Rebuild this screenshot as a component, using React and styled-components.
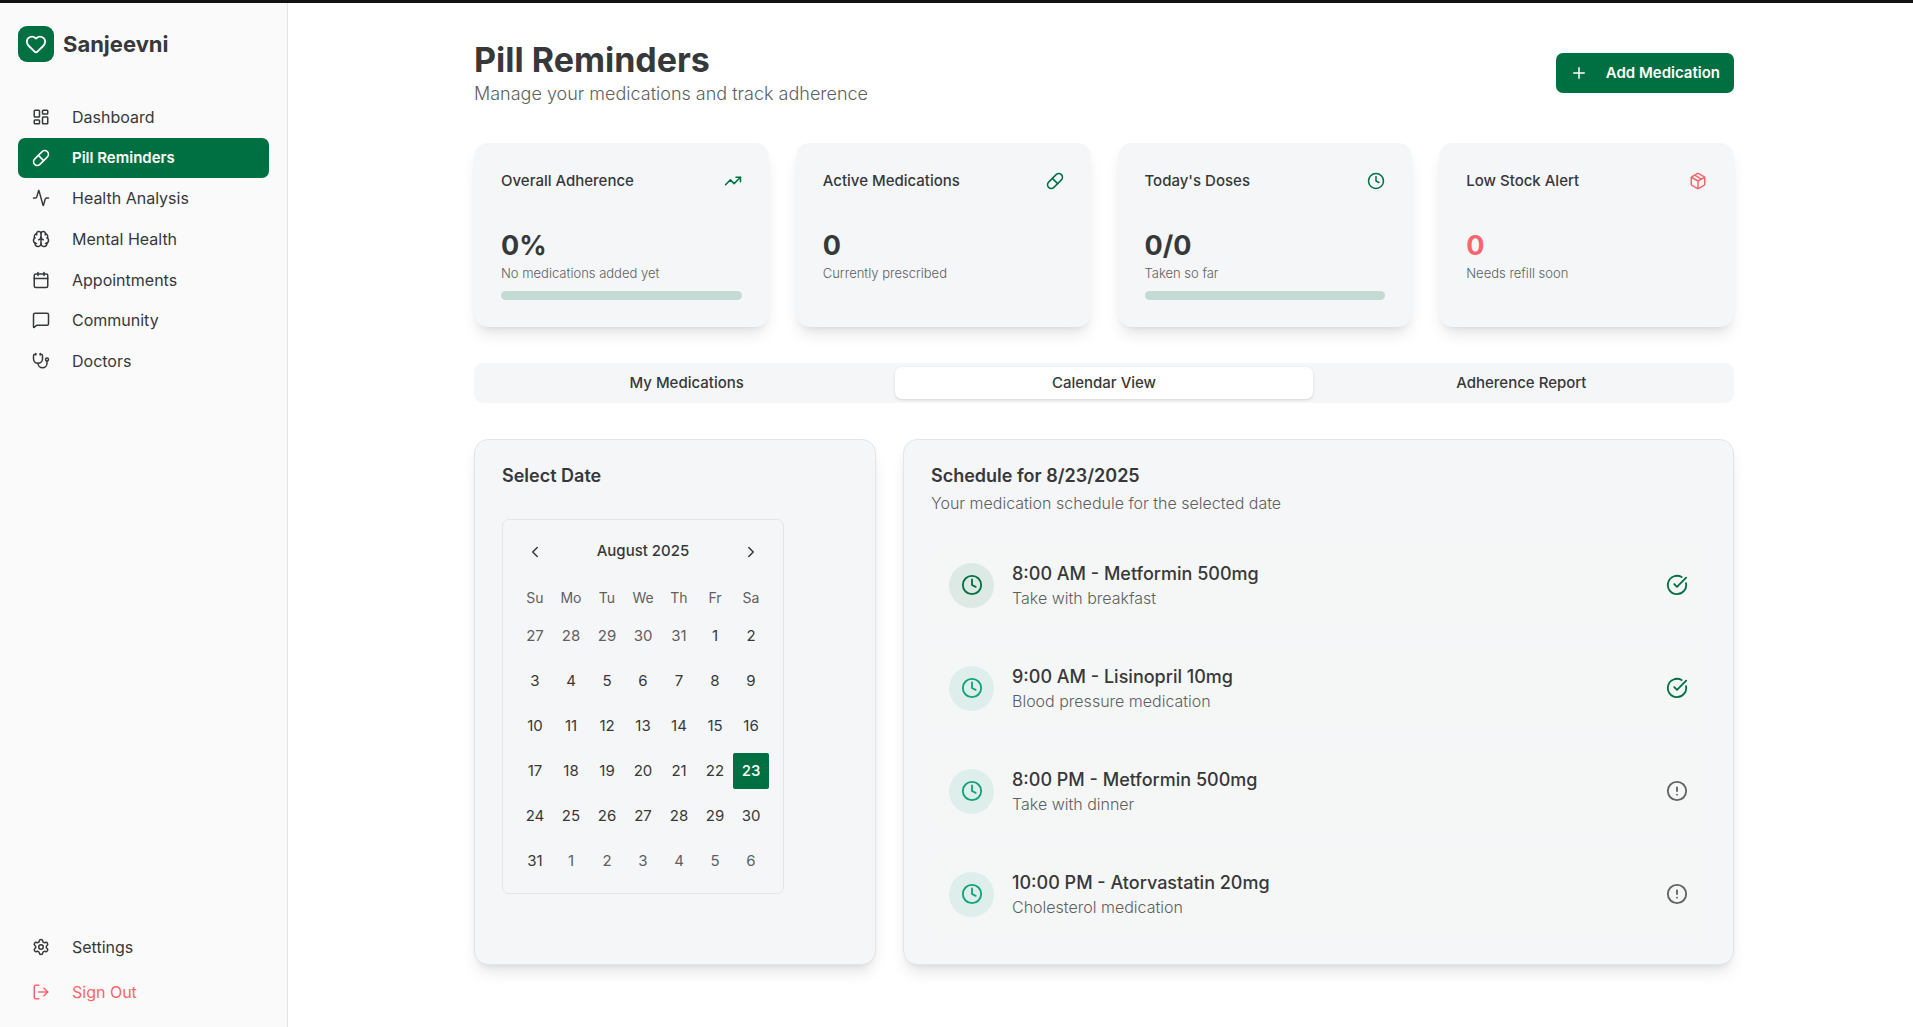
import React, { useState } from "react";
import styled, { createGlobalStyle, css } from "styled-components";
import {
  Activity, Brain, Calendar, ChevronLeft, ChevronRight, CircleAlert, CircleCheckBig, Clock,
  Heart, LayoutDashboard, LogOut, MessageSquare, Package, Pill, Plus, Settings, Stethoscope, TrendingUp,
} from "lucide-react";

const color = {
  primary: "#007042",
  accent: "#10a37a",
  danger: "#f8666d",
  text: "#37383a",
  muted: "#5d5f62",
  card: "#f5f6f8",
  border: "#e4e5e7",
};

const GlobalStyle = createGlobalStyle`
  *, *::before, *::after { box-sizing: border-box; }
  body {
    margin: 0;
    background: #fff;
    color: ${color.text};
    font-family: Inter, "Liberation Sans", sans-serif;
    font-size: 16px;
  }
  h1, h2, h3, p, ul { margin: 0; padding: 0; }
  button { font: inherit; color: inherit; border: 0; background: none; padding: 0; cursor: pointer; }
  svg { flex: none; display: block; }
`;

const Shell = styled.div`
  display: flex;
  min-height: 100vh;
  border-top: 3px solid #121212;
`;

const Sidebar = styled.aside`
  flex: none;
  width: 288px;
  display: flex;
  flex-direction: column;
  padding: 23px 18px 13px;
  background: #fafafa;
  border-right: 1px solid #e5e5e5;
`;

const Brand = styled.div`
  display: flex;
  align-items: center;
  gap: 9px;
  margin-bottom: 35px;
  font-size: 22px;
  line-height: 34px;
  font-weight: 700;
`;

const BrandMark = styled.span`
  display: grid;
  place-items: center;
  width: 36px;
  height: 36px;
  border-radius: 9px;
  background: ${color.primary};
  color: #fff;
`;

const NavList = styled.nav`
  display: grid;
  grid-auto-rows: 1fr;
  height: 284px;
`;

const NavLink = styled.a`
  display: flex;
  align-items: center;
  gap: 22px;
  padding: 0 14px;
  border-radius: 7px;
  font-size: 16px;
  text-decoration: none;
  color: ${(p) => (p.$tone === "danger" ? color.danger : color.text)};
  ${(p) => p.$active && css`
    background: ${color.primary};
    color: #fff;
    font-size: 15px;
    font-weight: 600;
  `}
`;

const FooterNav = styled.nav`
  display: grid;
  grid-auto-rows: 45px;
  margin-top: auto;
`;

const Main = styled.main`
  flex: 1;
  min-width: 0;
  padding: 36px 18px 36px 25px;
`;

const Content = styled.div`
  display: grid;
  gap: 36px;
  max-width: 1260px;
  margin: 0 auto;
`;

const PageHeader = styled.header`
  display: flex;
  align-items: center;
  justify-content: space-between;
`;

const PageTitle = styled.h1`
  font-size: 34px;
  line-height: 41px;
  font-weight: 700;
`;

const PageSubtitle = styled.p`
  font-size: 18px;
  line-height: 27px;
  font-weight: 300;
  color: ${color.muted};
`;

const PrimaryButton = styled.button`
  display: flex;
  align-items: center;
  gap: 18px;
  height: 40px;
  padding: 0 14px 1px;
  border-radius: 7px;
  background: ${color.primary};
  color: #fff;
  font-size: 15px;
  font-weight: 600;
`;

const StatGrid = styled.section`
  display: grid;
  grid-template-columns: repeat(4, 1fr);
  gap: 27px;
`;

const cardShadow = css`
  box-shadow: 0 10px 15px -3px rgba(0, 0, 0, 0.1), 0 4px 6px -4px rgba(0, 0, 0, 0.1);
`;

const StatCard = styled.article`
  min-height: 184px;
  padding: 27px;
  border-radius: 14px;
  background: ${color.card};
  ${cardShadow}
`;

const StatHead = styled.div`
  display: flex;
  align-items: center;
  justify-content: space-between;
  margin-bottom: 37px;
  line-height: 21px;
  color: ${(p) => (p.$danger ? color.danger : color.primary)};
`;

const StatTitle = styled.h2`
  font-size: 15px;
  font-weight: 500;
  color: ${color.text};
`;

const StatValue = styled.p`
  font-size: 27px;
  line-height: 36px;
  font-weight: 700;
  color: ${(p) => (p.$danger ? color.danger : "inherit")};
`;

const StatCaption = styled.p`
  font-size: 13px;
  line-height: 18px;
  font-weight: 300;
  color: ${color.muted};
`;

const Track = styled.div`
  height: 9px;
  margin-top: 9px;
  border-radius: 5px;
  overflow: hidden;
  background: #c4dbd3;
`;

const TrackFill = styled.div`
  height: 100%;
  background: ${color.primary};
`;

const TabList = styled.div`
  display: grid;
  grid-template-columns: repeat(3, 1fr);
  padding: 4px;
  border-radius: 9px;
  background: ${color.card};
`;

const Tab = styled.button`
  height: 32px;
  padding-bottom: 1px;
  border-radius: 7px;
  font-size: 15px;
  font-weight: 500;
  ${(p) => p.$active && css`
    background: #fff;
    box-shadow: 0 1px 3px rgba(0, 0, 0, 0.14);
  `}
`;

const Panels = styled.div`
  display: grid;
  grid-template-columns: repeat(3, 1fr);
  gap: 27px;
`;

const Panel = styled.section`
  padding: 27px;
  border: 1px solid ${color.border};
  border-radius: 14px;
  background: ${color.card};
  ${cardShadow}
`;

const WidePanel = styled(Panel)`
  grid-column: span 2;
`;

const PanelHead = styled.div`
  display: grid;
  gap: 7px;
  margin-bottom: 27px;
`;

const PanelTitle = styled.h2`
  font-size: 18px;
  line-height: 18px;
  font-weight: 600;
`;

const PanelText = styled.p`
  font-size: 16px;
  line-height: 23px;
  font-weight: 300;
  color: ${color.muted};
`;

const CalendarBox = styled.div`
  width: fit-content;
  margin-top: 34px;
  padding: 14px;
  border: 1px solid ${color.border};
  border-radius: 7px;
`;

const MonthBar = styled.div`
  display: flex;
  align-items: center;
  justify-content: space-between;
  height: 36px;
  margin-bottom: 17px;
  font-size: 15px;
  line-height: 22px;
  font-weight: 500;
`;

const MonthLabel = styled.span`
  padding-bottom: 2px;
`;

const MonthButton = styled.button`
  display: grid;
  place-items: center;
  width: 36px;
  height: 36px;
`;

const DayTable = styled.table`
  border-collapse: collapse;
  th {
    width: 36px;
    height: 22px;
    padding: 0 0 2px;
    font-size: 14px;
    font-weight: 400;
    color: ${color.muted};
  }
  td { padding: 9px 0 0; }
`;

const Day = styled.button`
  display: block;
  width: 36px;
  height: 36px;
  padding-bottom: 2px;
  font-size: 15px;
  color: ${(p) => (p.$outside ? color.muted : color.text)};
  ${(p) => p.$selected && css`
    border-radius: 2px;
    background: ${color.primary};
    color: #fff;
    font-weight: 500;
  `}
`;

const DoseList = styled.ul`
  display: grid;
  gap: 17px;
  list-style: none;
`;

const DoseItem = styled.li`
  display: flex;
  align-items: center;
  gap: 18px;
  padding: 18px;
  border-radius: 9px;
  background: #f5f7f7;
`;

const DoseBadge = styled.span`
  display: grid;
  place-items: center;
  width: 45px;
  height: 45px;
  border-radius: 50%;
  background: ${(p) => (p.$accent ? "#deeeea" : "#dde9e5")};
  color: ${(p) => (p.$accent ? color.accent : color.primary)};
`;

const DoseText = styled.div`
  flex: 1;
`;

const DoseName = styled.h3`
  font-size: 18px;
  line-height: 27px;
  font-weight: 500;
`;

const DoseState = styled.span`
  color: ${(p) => (p.$taken ? color.primary : "#606264")};
`;

const NAV = [
  ["Dashboard", LayoutDashboard],
  ["Pill Reminders", Pill],
  ["Health Analysis", Activity],
  ["Mental Health", Brain],
  ["Appointments", Calendar],
  ["Community", MessageSquare],
  ["Doctors", Stethoscope],
];

const STATS = [
  { title: "Overall Adherence", icon: TrendingUp, value: "0%", caption: "No medications added yet", progress: 0 },
  { title: "Active Medications", icon: Pill, value: "0", caption: "Currently prescribed" },
  { title: "Today's Doses", icon: Clock, value: "0/0", caption: "Taken so far", progress: 0 },
  { title: "Low Stock Alert", icon: Package, value: "0", caption: "Needs refill soon", danger: true },
];

const TABS = ["My Medications", "Calendar View", "Adherence Report"];
const WEEKDAYS = ["Su", "Mo", "Tu", "We", "Th", "Fr", "Sa"];

const DOSES = [
  { name: "8:00 AM - Metformin 500mg", note: "Take with breakfast", taken: true },
  { name: "9:00 AM - Lisinopril 10mg", note: "Blood pressure medication", taken: true, accent: true },
  { name: "8:00 PM - Metformin 500mg", note: "Take with dinner", accent: true },
  { name: "10:00 PM - Atorvastatin 20mg", note: "Cholesterol medication", accent: true },
];

const WEEKS = Array.from({ length: 6 }, (_, week) =>
  Array.from({ length: 7 }, (_, day) => {
    const date = new Date(2025, 6, 27 + week * 7 + day);
    return { number: date.getDate(), outside: date.getMonth() !== 7, key: date.toDateString() };
  })
);

function MonthCalendar() {
  const [selected, setSelected] = useState(new Date(2025, 7, 23).toDateString());
  return (
    <CalendarBox>
      <MonthBar>
        <MonthButton aria-label="Previous month"><ChevronLeft size={18} /></MonthButton>
        <MonthLabel>August 2025</MonthLabel>
        <MonthButton aria-label="Next month"><ChevronRight size={18} /></MonthButton>
      </MonthBar>
      <DayTable>
        <thead>
          <tr>{WEEKDAYS.map((d) => <th key={d} scope="col">{d}</th>)}</tr>
        </thead>
        <tbody>
          {WEEKS.map((week) => (
            <tr key={week[0].key}>
              {week.map((d) => (
                <td key={d.key}>
                  <Day $outside={d.outside} $selected={d.key === selected} onClick={() => setSelected(d.key)}>
                    {d.number}
                  </Day>
                </td>
              ))}
            </tr>
          ))}
        </tbody>
      </DayTable>
    </CalendarBox>
  );
}

export default function App() {
  const [tab, setTab] = useState("Calendar View");
  return (
    <>
      <GlobalStyle />
      <Shell>
        <Sidebar>
          <Brand>
            <BrandMark><Heart size={22} /></BrandMark>
            Sanjeevni
          </Brand>
          <NavList aria-label="Main">
            {NAV.map(([label, Icon]) => (
              <NavLink key={label} href="#" $active={label === "Pill Reminders"}>
                <Icon size={18} />
                {label}
              </NavLink>
            ))}
          </NavList>
          <FooterNav aria-label="Account">
            <NavLink href="#"><Settings size={18} />Settings</NavLink>
            <NavLink href="#" $tone="danger"><LogOut size={18} />Sign Out</NavLink>
          </FooterNav>
        </Sidebar>

        <Main>
          <Content>
            <PageHeader>
              <div>
                <PageTitle>Pill Reminders</PageTitle>
                <PageSubtitle>Manage your medications and track adherence</PageSubtitle>
              </div>
              <PrimaryButton><Plus size={18} />Add Medication</PrimaryButton>
            </PageHeader>

            <StatGrid>
              {STATS.map(({ title, icon: Icon, value, caption, progress, danger }) => (
                <StatCard key={title}>
                  <StatHead $danger={danger}>
                    <StatTitle>{title}</StatTitle>
                    <Icon size={18} />
                  </StatHead>
                  <StatValue $danger={danger}>{value}</StatValue>
                  <StatCaption>{caption}</StatCaption>
                  {progress !== undefined && (
                    <Track role="progressbar" aria-label={title} aria-valuenow={progress}>
                      <TrackFill style={{ width: `${progress}%` }} />
                    </Track>
                  )}
                </StatCard>
              ))}
            </StatGrid>

            <TabList role="tablist">
              {TABS.map((label) => (
                <Tab key={label} role="tab" aria-selected={tab === label} $active={tab === label} onClick={() => setTab(label)}>
                  {label}
                </Tab>
              ))}
            </TabList>

            <Panels>
              <Panel>
                <PanelTitle>Select Date</PanelTitle>
                <MonthCalendar />
              </Panel>
              <WidePanel>
                <PanelHead>
                  <PanelTitle>Schedule for 8/23/2025</PanelTitle>
                  <PanelText>Your medication schedule for the selected date</PanelText>
                </PanelHead>
                <DoseList>
                  {DOSES.map((dose) => (
                    <DoseItem key={dose.name}>
                      <DoseBadge $accent={dose.accent}><Clock size={22} /></DoseBadge>
                      <DoseText>
                        <DoseName>{dose.name}</DoseName>
                        <PanelText>{dose.note}</PanelText>
                      </DoseText>
                      <DoseState $taken={dose.taken}>
                        {dose.taken ? <CircleCheckBig size={22} /> : <CircleAlert size={22} />}
                      </DoseState>
                    </DoseItem>
                  ))}
                </DoseList>
              </WidePanel>
            </Panels>
          </Content>
        </Main>
      </Shell>
    </>
  );
}
